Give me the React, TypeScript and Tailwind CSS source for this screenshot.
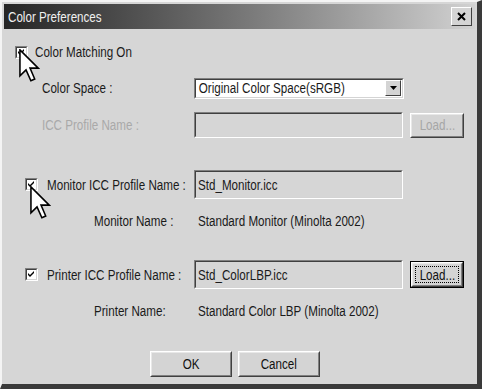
import React from "react";

const font = { fontFamily: '"Liberation Sans", Arial, sans-serif' };

// the dialog font is a condensed one; squeeze Liberation Sans to match
function T({ children, className = "", center }: { children: React.ReactNode; className?: string; center?: boolean }) {
  return (
    <span
      className={`inline-block whitespace-nowrap scale-x-[0.83] ${center ? "origin-center" : "origin-left"} ${className}`}
    >
      {children}
    </span>
  );
}

function CheckBox() {
  return (
    <div className="h-[13px] w-[13px] shrink-0 border border-t-[#808080] border-l-[#808080] border-b-white border-r-white">
      <div className="flex h-full w-full items-center justify-center border border-t-[#404040] border-l-[#404040] border-b-[#d4d4d4] border-r-[#d4d4d4] bg-white">
        <svg width="7" height="7" viewBox="0 0 7 7">
          <path d="M0 2 L2 4 L6 0 L6 2 L2 6 L0 4 Z" fill="#000" />
        </svg>
      </div>
    </div>
  );
}

function Sunken({ className, children }: { className: string; children?: React.ReactNode }) {
  return (
    <div className={`shrink-0 border border-t-[#808080] border-l-[#808080] border-b-white border-r-white ${className}`}>
      <div className="flex h-full w-full items-center border border-t-[#404040] border-l-[#404040] border-b-[#d4d4d4] border-r-[#d4d4d4] pl-[2px]">
        {children}
      </div>
    </div>
  );
}

function Btn({ label, className, focused, disabled }: { label: string; className: string; focused?: boolean; disabled?: boolean }) {
  const inner = (
    <div className="flex h-full w-full items-center justify-center border border-t-white border-l-white border-b-[#404040] border-r-[#404040] bg-[#d4d4d4]">
      <div className="flex h-full w-full items-center justify-center border border-t-[#e8e8e8] border-l-[#e8e8e8] border-b-[#808080] border-r-[#808080] p-[2px]">
        <div className={`flex h-full w-full items-center justify-center ${focused ? "border border-dotted border-black" : ""}`}>
          <T center className={disabled ? "text-[#a6a6a6]" : "text-[#111]"}>
            {label}
          </T>
        </div>
      </div>
    </div>
  );
  return focused ? (
    <div className={`shrink-0 border border-black ${className}`}>{inner}</div>
  ) : (
    <div className={`shrink-0 ${className}`}>{inner}</div>
  );
}

function Cursor({ className }: { className: string }) {
  return (
    <svg className={`pointer-events-none absolute ${className}`} width="21" height="33" viewBox="0 0 12 19">
      <path
        d="M0.5 0.5 L0.5 15.5 L4 12 L6.8 18.3 L9 17.3 L6.3 11 L11 11 Z"
        fill="#fff"
        stroke="#000"
        strokeWidth="0.9"
        strokeLinejoin="miter"
      />
    </svg>
  );
}

export default function App() {
  return (
    <div className="relative h-[389px] w-[482px] overflow-hidden bg-white" style={font}>
      <div className="flex h-full w-full flex-col border-t-[2px] border-l-[2px] border-r-[5px] border-b-[5px] border-t-[#f4f4f4] border-l-[#f4f4f4] border-r-[#3a3a3a] border-b-[#3a3a3a] bg-[#d6d6d6]">
        {/* title bar */}
        <div className="mx-[2px] mt-[2px] flex h-[25px] items-center justify-between bg-gradient-to-r from-[#262626] via-[#767676] to-[#d2d2d2] pl-[4px] pr-[3px]">
          <T className="text-[14px] leading-[16px] text-[#f0f0f0] scale-x-[0.9]">Color Preferences</T>
          <div className="flex h-[19px] w-[21px] items-center justify-center border border-t-white border-l-white border-b-[#404040] border-r-[#404040] bg-[#d4d4d4]">
            <svg width="9" height="9" viewBox="0 0 9 9">
              <path d="M1 1 L8 8 M8 1 L1 8" stroke="#000" strokeWidth="2" />
            </svg>
          </div>
        </div>

        <div className="flex flex-col pl-[13px] pt-[16px] text-[14px] leading-[16px] text-[#1a1a1a]">
          {/* Color Matching On */}
          <div className="flex h-[14px] items-center gap-[7px]">
            <CheckBox />
            <T>Color Matching On</T>
          </div>

          {/* Color Space */}
          <div className="mt-[19px] flex h-[20px] items-center">
            <div className="w-[179px] pl-[27px]">
              <T>Color Space :</T>
            </div>
            <Sunken className="h-[21px] w-[210px] bg-white">
              <div className="flex h-full w-full items-center justify-between bg-white">
                <T className="pl-[1px]">Original Color Space(sRGB)</T>
                <div className="mr-[1px] flex h-[16px] w-[16px] items-center justify-center border border-t-white border-l-white border-b-[#404040] border-r-[#404040] bg-[#d4d4d4]">
                  <svg width="7" height="4" viewBox="0 0 7 4">
                    <path d="M0 0 L7 0 L3.5 4 Z" fill="#000" />
                  </svg>
                </div>
              </div>
            </Sunken>
          </div>

          {/* ICC Profile Name (disabled) */}
          <div className="mt-[14px] flex h-[26px] items-center">
            <div className="w-[179px] pl-[27px] text-[#a9a9a9]">
              <T>ICC Profile Name :</T>
            </div>
            <Sunken className="h-[26px] w-[209px]" />
            <Btn label="Load..." className="ml-[7px] h-[25px] w-[54px]" disabled />
          </div>

          {/* Monitor */}
          <div className="mt-[32px] flex h-[29px] items-center">
            <div className="flex w-[179px] items-center gap-[9px] pl-[10px]">
              <CheckBox />
              <T>Monitor ICC Profile Name :</T>
            </div>
            <Sunken className="h-[29px] w-[209px]">
              <T>Std_Monitor.icc</T>
            </Sunken>
          </div>

          <div className="mt-[14px] flex h-[16px] items-center">
            <div className="w-[183px] pl-[79px]">
              <T>Monitor Name :</T>
            </div>
            <T>Standard Monitor (Minolta 2002)</T>
          </div>

          {/* Printer */}
          <div className="mt-[31px] flex h-[29px] items-center">
            <div className="flex w-[179px] items-center gap-[9px] pl-[10px]">
              <CheckBox />
              <T>Printer ICC Profile Name :</T>
            </div>
            <Sunken className="h-[29px] w-[209px]">
              <T>Std_ColorLBP.icc</T>
            </Sunken>
            <Btn label="Load..." className="ml-[7px] h-[27px] w-[54px]" focused />
          </div>

          <div className="mt-[14px] flex h-[16px] items-center">
            <div className="w-[183px] pl-[79px]">
              <T>Printer Name:</T>
            </div>
            <T>Standard Color LBP (Minolta 2002)</T>
          </div>

          {/* Buttons */}
          <div className="mt-[32px] flex items-center gap-[6px] pl-[135px]">
            <Btn label="OK" className="h-[26px] w-[82px]" />
            <Btn label="Cancel" className="h-[26px] w-[82px]" />
          </div>
        </div>
      </div>

      <Cursor className="left-[19px] top-[49px]" />
      <Cursor className="left-[30px] top-[186px]" />
    </div>
  );
}
